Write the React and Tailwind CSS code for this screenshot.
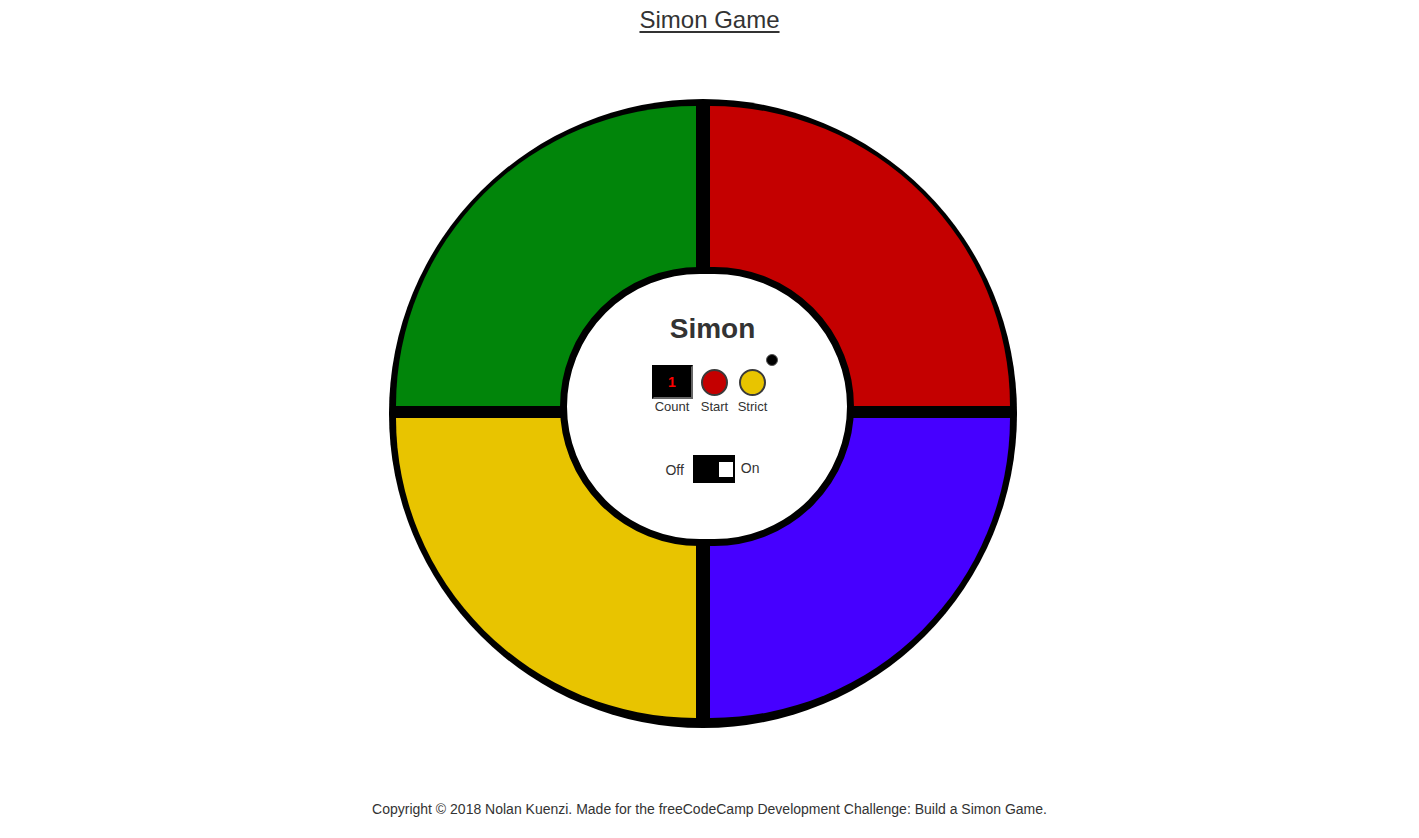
import React from "react";

function Quadrant({ color, corner }) {
  return (
    <div className={`relative w-[300px] h-[300px] ${color} ${corner}`}>
    </div>
  );
}

export default function App() {
  return (
    <div className="min-h-[838px] w-full bg-white text-[#333] font-['Liberation_Sans',Arial,sans-serif] flex flex-col items-center">
      <h1 className="pt-[6px] text-[24px] leading-[28px] underline underline-offset-[3px] decoration-[2px] font-normal">
        Simon Game
      </h1>

      <div className="mt-[65px] flex justify-center w-full pr-[13px]">
        <div className="relative w-[628px] h-[629px] rounded-full bg-black p-[7px] grid grid-cols-[300px_300px] grid-rows-[299px_300px] gap-x-[14px] gap-y-[13px]">
          <Quadrant color="bg-[#01850a]" corner="rounded-tl-full" />
          <Quadrant color="bg-[#c40000]" corner="rounded-tr-full" />
          <Quadrant color="bg-[#e8c400]" corner="rounded-bl-full" />
          <Quadrant color="bg-[#4600ff]" corner="rounded-br-full" />

          <div className="absolute left-[171px] top-[168px] w-[294px] h-[279px] rounded-full bg-white border-[7px] border-black flex flex-col items-center">
            <div className="mt-[39px] ml-[11px] text-[28px] leading-[32px] font-bold text-[#333]">Simon</div>

            <div className="mt-[20px] ml-[6px] flex gap-[7px]">
              <div className="w-[41px] flex flex-col items-center">
                <div className="w-[41px] h-[34px] bg-black border-2 border-black border-r-[#666] border-b-[#666] flex items-center justify-center text-[14px] font-bold text-[#ff0000]">
                  1
                </div>
                <div className="text-[13px] leading-[14px] mt-[1px]">Count</div>
              </div>
              <div className="w-[30px] flex flex-col items-center">
                <div className="h-[34px] flex items-center">
                  <div className="w-[27px] h-[27px] rounded-full bg-[#c40000] border-2 border-[#3a3a3a]"></div>
                </div>
                <div className="text-[13px] leading-[14px] mt-[1px]">Start</div>
              </div>
              <div className="relative w-[32px] flex flex-col items-center">
                <div className="h-[34px] flex items-center">
                  <div className="w-[27px] h-[27px] rounded-full bg-[#e8c400] border-2 border-[#3a3a3a]"></div>
                </div>
                <div className="text-[13px] leading-[14px] mt-[1px]">Strict</div>
                <div className="absolute left-[29px] top-[-11px] w-[12px] h-[12px] rounded-full bg-black border border-[#555]"></div>
              </div>
            </div>

            <div className="mt-[41px] ml-[11px] flex items-center">
              <span className="text-[14px] leading-[16px] mt-[1px]">Off</span>
              <div className="ml-[9px] w-[42px] h-[28px] bg-black flex items-center justify-end pr-[2px]">
                <div className="w-[14px] h-[15px] bg-white"></div>
              </div>
              <span className="ml-[6px] text-[14px] leading-[16px] mt-[-2px]">On</span>
            </div>
          </div>
        </div>
      </div>

      <footer className="mt-[73px] text-[14px] leading-[16px] text-[#333]">
        Copyright © 2018 Nolan Kuenzi. Made for the freeCodeCamp Development Challenge: Build a Simon Game.
      </footer>
    </div>
  );
}
